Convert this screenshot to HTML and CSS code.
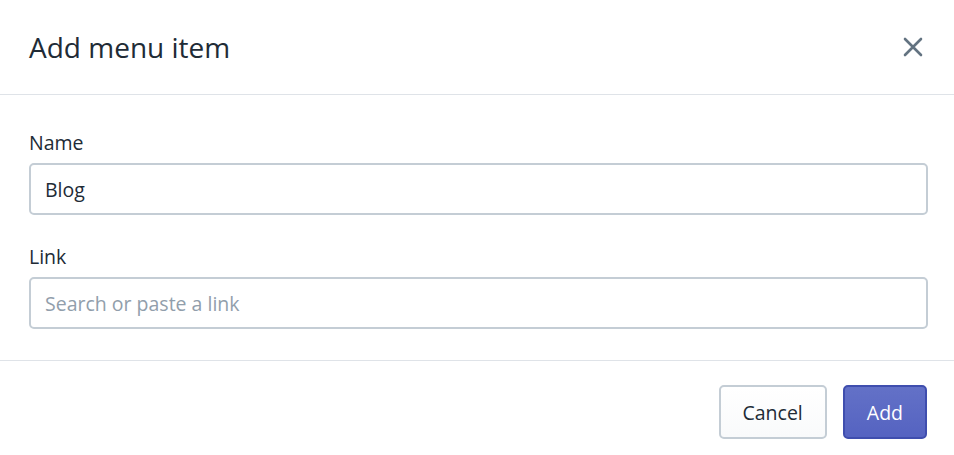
FILE: index.html
```html
<!DOCTYPE html>
<html lang="en">
<head>
    <meta charset="UTF-8">
    <title>Add menu item</title>
    <link rel="stylesheet" href="styles.css">
</head>
<body>
    <div class="modal">
        <div class="header">
            <h2 class="title">Add menu item</h2>
            <button class="close" aria-label="Close">
                <svg width="20" height="20" viewBox="0 0 20 20">
                    <path d="M2 2 L18 18 M18 2 L2 18" stroke="#637381" stroke-width="2.6" stroke-linecap="round"/>
                </svg>
            </button>
        </div>
        <div class="body">
            <div class="field">
                <label class="label" for="name">Name</label>
                <input class="input" id="name" type="text" value="Blog">
            </div>
            <div class="field">
                <label class="label" for="link">Link</label>
                <input class="input" id="link" type="text" placeholder="Search or paste a link">
            </div>
        </div>
        <div class="footer">
            <button class="btn">Cancel</button>
            <button class="btn primary">Add</button>
        </div>
    </div>
</body>
</html>
```

FILE: styles.css
```css
body {
    margin: 0;
    background-color: #fff;
    font-family: "Open Sans", "Noto Sans", sans-serif;
    color: #212b36;
}

.modal {
    width: 954px;
}

.header {
    height: 94px;
    display: flex;
    align-items: center;
    justify-content: space-between;
    padding: 0 29px;
    border-bottom: 1px solid #dfe3e8;
}

.title {
    margin: 0;
    font-size: 28px;
    font-weight: 400;
    color: #212b36;
}

.close {
    background: transparent;
    border: none;
    padding: 0;
    margin-right: 2px;
    width: 20px;
    height: 20px;
    display: flex;
}

.body {
    padding: 34px 26px 31px 29px;
    display: flex;
    flex-direction: column;
    gap: 28px;
}

.field {
    display: flex;
    flex-direction: column;
}

.label {
    font-size: 19.5px;
    line-height: 28px;
    margin-bottom: 6px;
}

.input {
    height: 52px;
    box-sizing: border-box;
    border: 2px solid #c4cdd5;
    border-radius: 5px;
    padding: 0 14px;
    font-family: inherit;
    font-size: 19.5px;
    color: #212b36;
}

.input::placeholder {
    color: #919eab;
}

.footer {
    border-top: 1px solid #dfe3e8;
    padding: 24px 27px;
    display: flex;
    justify-content: flex-end;
    gap: 16px;
}

.btn {
    height: 54px;
    box-sizing: border-box;
    padding: 0 22px;
    border: 2px solid #c4cdd5;
    border-radius: 5px;
    background: linear-gradient(#fff, #f9fafb);
    font-family: inherit;
    font-size: 19.5px;
    color: #212b36;
}

.btn.primary {
    border-color: #3f4eae;
    background: linear-gradient(#6371c7, #5563c1);
    color: #fff;
}
```
